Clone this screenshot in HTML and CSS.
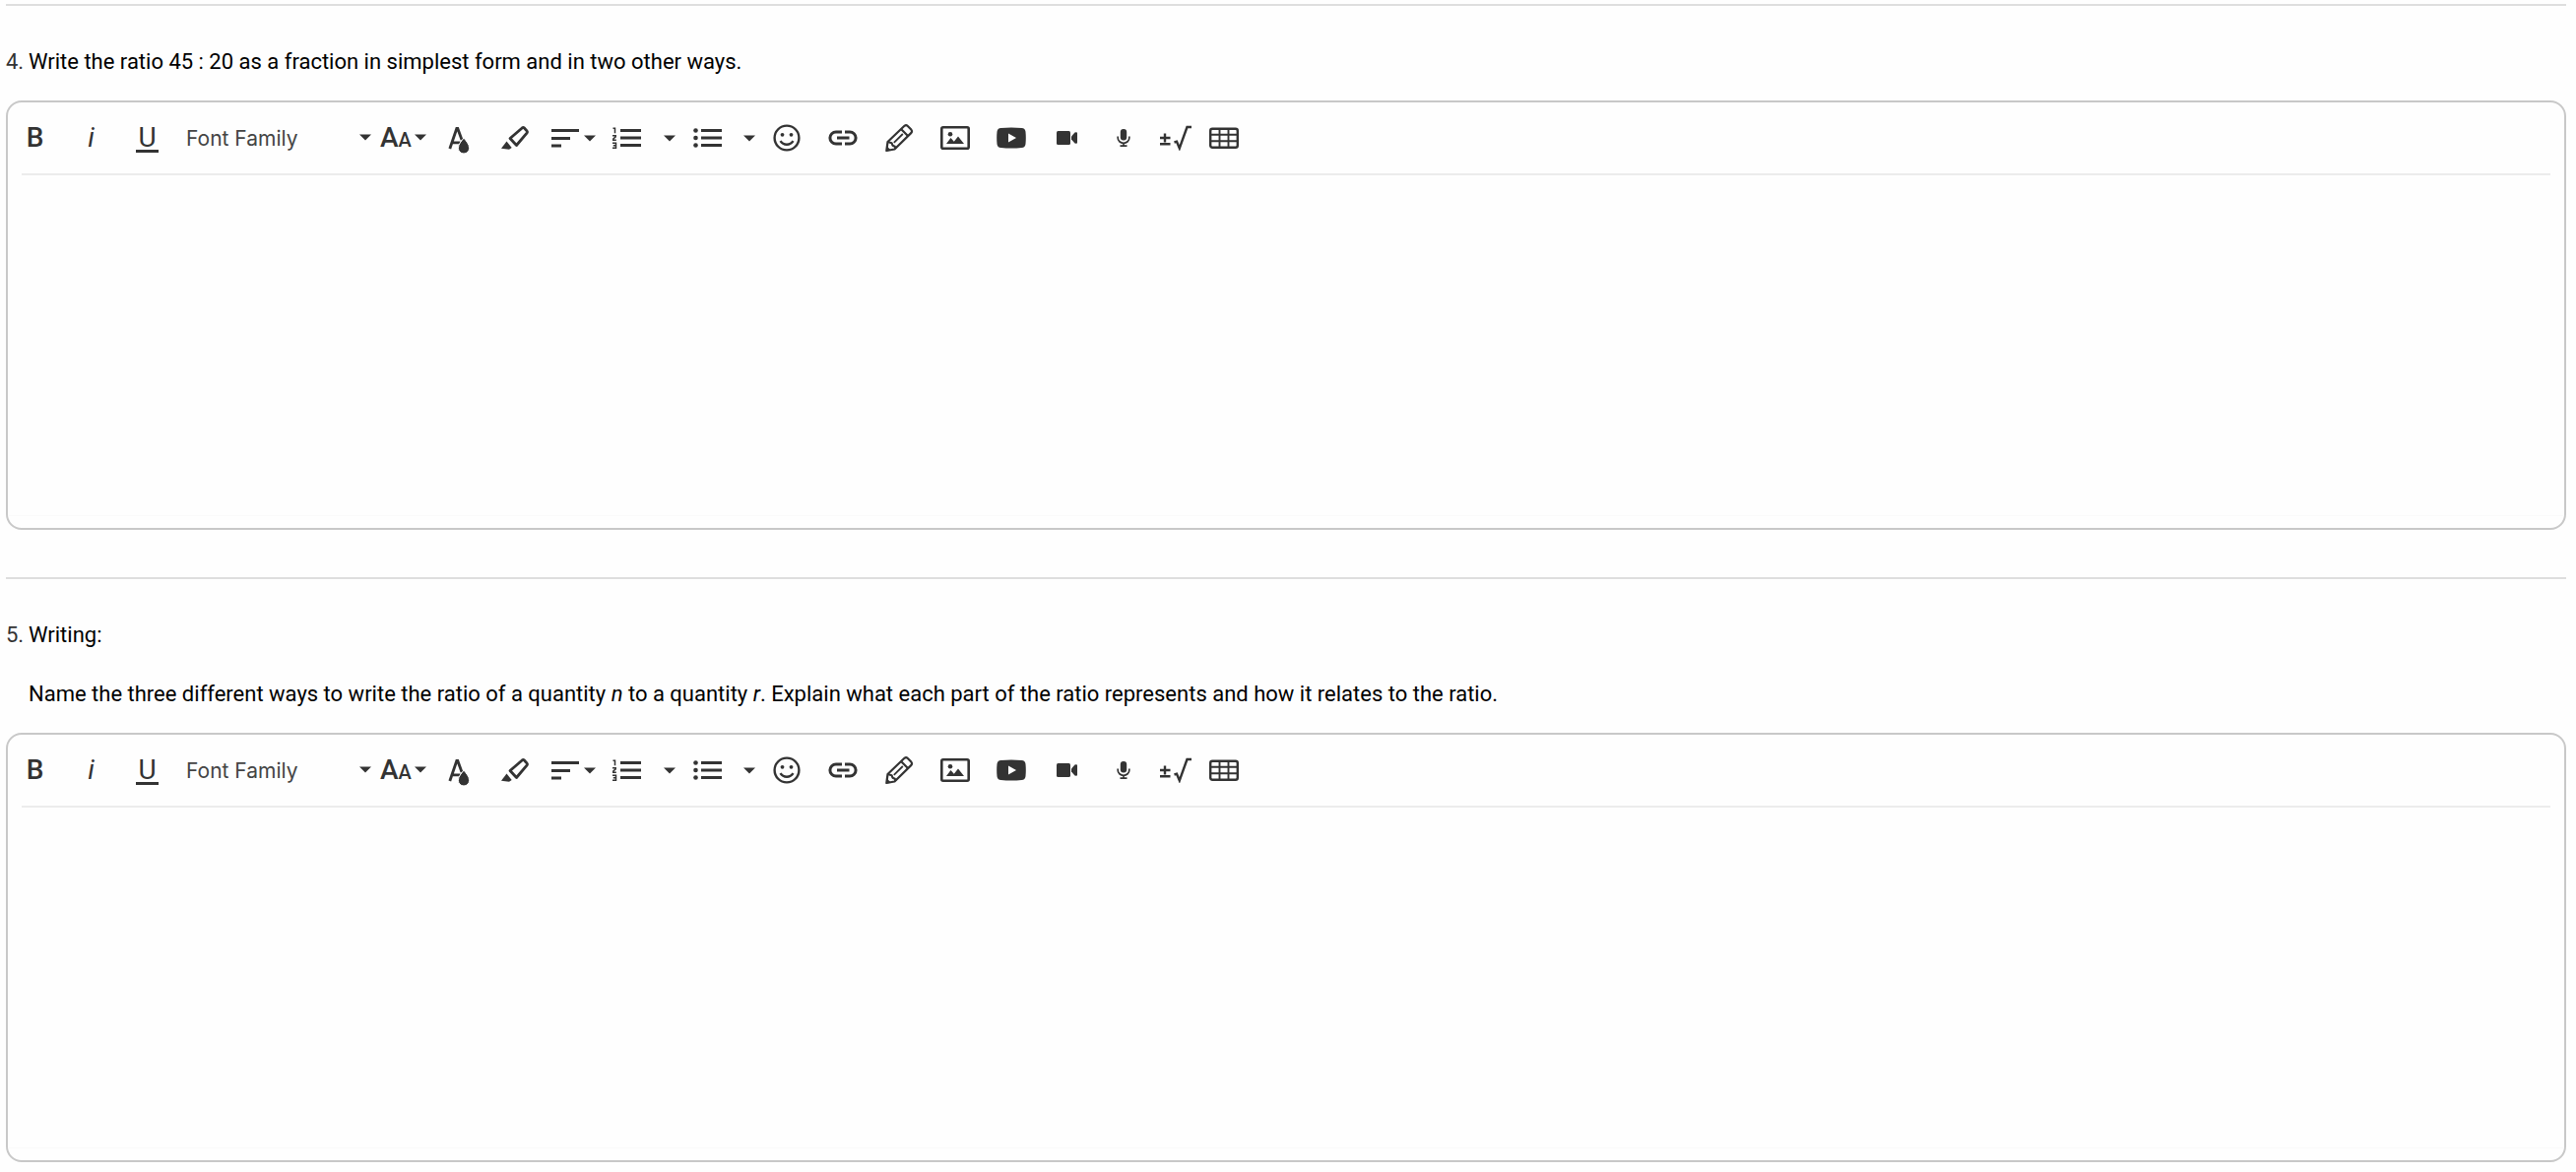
FILE: index.html
```html
<!DOCTYPE html>
<html lang="en">
<head>
	<meta charset="UTF-8">
	<meta name="viewport" content="width=device-width, initial-scale=1.0">
	<title>Ratios - Questions</title>
	<link rel="stylesheet" href="styles.css">
</head>
<body>
<!-- Shared icons for the editor toolbars -->
<svg class="icon-defs" aria-hidden="true">
	<symbol id="caret" viewBox="0 0 12 7"><path d="M0 .5h12L6 6.5z"/></symbol>
	<symbol id="text-color" viewBox="0 0 24 34">
		<path d="M2.800 28L9.800 7.500h1L15 19M5.500 21.800h8" fill="none" stroke="currentColor" stroke-width="2.800"/>
		<path d="M17 17c2.500 3.500 5.600 6.200 5.600 10.400a5.600 5.600 0 0 1-11.200 0c0-4.200 3.100-6.900 5.600-10.400z" stroke="#fefefe" stroke-width="1"/>
	</symbol>
	<symbol id="marker" viewBox="0 0 30 26">
		<path d="M10 13.500L22.500 2.700q.9-.7 1.700.1l3 3.300q.7.8 0 1.700L16.500 20.500z" fill="none" stroke="currentColor" stroke-width="2.800" stroke-linejoin="round"/>
		<path d="M6.500 16.500l5.200 6.500-2.700 1.800L1 23.800z"/>
	</symbol>
	<symbol id="align" viewBox="0 0 28 20"><path d="M0 1h28v3H0zM0 9h19v3H0zM0 16.500h10v3H0z"/></symbol>
	<symbol id="numbers" viewBox="0 0 30 24">
		<path d="M8 3h21v3H8zM8 10.500h21v3H8zM8 18h21v3H8z"/>
		<path d="M.5 2.200h2v5M0 9.800h3.200v1L.2 13.500v.8h3.600M0 17.200h3.500v5H0M.8 19.700h2.500" fill="none" stroke="currentColor" stroke-width="1.500"/>
	</symbol>
	<symbol id="bullets" viewBox="0 0 30 24">
		<path d="M9 3h21v3H9zM9 10.500h21v3H9zM9 18h21v3H9z"/>
		<circle cx="3.500" cy="4.500" r="2.300"/><circle cx="3.500" cy="12" r="2.300"/><circle cx="3.500" cy="19.500" r="2.300"/>
	</symbol>
	<symbol id="smile" viewBox="0 0 28 28">
		<circle cx="14" cy="14" r="12.400" fill="none" stroke="currentColor" stroke-width="2.400"/>
		<circle cx="9.500" cy="10.800" r="1.900"/><circle cx="18.500" cy="10.800" r="1.900"/>
		<path d="M7.500 17.200c3 4.800 10 4.800 13 0" fill="none" stroke="currentColor" stroke-width="2.400"/>
	</symbol>
	<symbol id="link" viewBox="0 0 30 18">
		<path d="M14 2.900H8a6.100 6.100 0 0 0 0 12.200h6M17 2.900h5a6.100 6.100 0 0 1 0 12.200h-5M9 9h12.500" fill="none" stroke="currentColor" stroke-width="3"/>
	</symbol>
	<symbol id="pencil" viewBox="0 0 30 30">
		<g fill="none" stroke="currentColor" stroke-width="2.200" stroke-linejoin="round">
			<path d="M2.300 28l1.200-9L20.500 2.800q1.700-1.300 3.300.2l3.500 3.600q1.400 1.700.1 3.300L10.500 26.500z"/>
			<path d="M3.500 19l4 1.200 1 2.500 2.300 1 .7 2.300M17.500 6.500l6.500 6.500"/>
			<path d="M9.800 19.800l9-8.800" stroke-width="1.800"/>
		</g>
		<path d="M2 28.500l.8-5 4.200 4.200z"/>
	</symbol>
	<symbol id="image" viewBox="0 0 30 24">
		<rect x="1.300" y="1.300" width="27.400" height="21.400" rx="1.500" fill="none" stroke="currentColor" stroke-width="2.600"/>
		<circle cx="10" cy="8.200" r="2.300"/>
		<path d="M6 18l4.500-6 3.300 3.800L18 10.500l6 7.500z"/>
	</symbol>
	<symbol id="youtube" viewBox="0 0 30 22">
		<path d="M4.500 1Q15 0 25.500 1q3.600.3 4 3.800.6 6.200 0 12.400-.4 3.500-4 3.800-10.500 1-21 0-3.600-.3-4-3.800-.6-6.200 0-12.400Q.9 1.300 4.500 1z"/>
		<path d="M12 6.500v9l8-4.500z" fill="#fff"/>
	</symbol>
	<symbol id="video" viewBox="0 0 22 16"><rect x="0" y="1" width="14" height="14" rx="1.500"/><path d="M15 6.500l3.500-4Q21 2 21 3v10q0 1-2.500.5l-3.500-4z"/></symbol>
	<symbol id="mic" viewBox="0 0 14 20">
		<rect x="3.800" y="1" width="6.400" height="11.500" rx="3"/>
		<path d="M1.200 8.500v1.500a5.800 5.300 0 0 0 11.600 0V8.500M7 15v3M3.500 18.200h7" fill="none" stroke="currentColor" stroke-width="1.700"/>
	</symbol>
	<symbol id="math" viewBox="0 0 34 26">
		<path d="M6 8.500v9M1 13h10.500M1 19.200h10.500" fill="none" stroke="currentColor" stroke-width="2.400"/>
		<path d="M15.500 17.500l2.500-.8 2.800 6.800L28.500 2H33" fill="none" stroke="currentColor" stroke-width="2.400"/>
	</symbol>
	<symbol id="table" viewBox="0 0 30 22">
		<rect x="1.200" y="1.700" width="27.600" height="19" rx="2" fill="none" stroke="currentColor" stroke-width="2.400"/>
		<path d="M10.500 1.500v19M19.500 1.500v19M1 7.800h28M1 14.200h28" fill="none" stroke="currentColor" stroke-width="1.900"/>
	</symbol>
</svg>

<main class="questions">
	<section class="question">
		<div class="prompt">
			<span class="number">4.</span>
			<div class="prompt-text">
				<p id="q4">Write the ratio 45 : 20 as a fraction in simplest form and in two other ways.</p>
			</div>
		</div>
		<div class="editor">
			<div class="toolbar">
				<button type="button" class="tool letter bold" aria-label="Bold">B</button>
				<button type="button" class="tool letter italic" aria-label="Italic">i</button>
				<button type="button" class="tool letter" aria-label="Underline"><span class="underlined">U</span></button>
				<div class="font-family">
					<select aria-label="Font Family"><option>Font Family</option></select>
					<svg width="12" height="7"><use href="#caret"/></svg>
				</div>
				<button type="button" class="tool size" aria-label="Font Size"><span class="letter">A</span><span class="small-letter">A</span><svg width="12" height="7"><use href="#caret"/></svg></button>
				<button type="button" class="tool" aria-label="Text Color"><svg width="24" height="34"><use href="#text-color"/></svg></button>
				<button type="button" class="tool" aria-label="Highlight"><svg width="30" height="26"><use href="#marker"/></svg></button>
				<button type="button" class="tool align" aria-label="Align"><svg width="28" height="20"><use href="#align"/></svg><svg width="12" height="7"><use href="#caret"/></svg></button>
				<button type="button" class="tool list" aria-label="Ordered List"><svg width="30" height="24"><use href="#numbers"/></svg></button>
				<button type="button" class="tool list-menu" aria-label="Ordered List Style"><svg width="12" height="7"><use href="#caret"/></svg></button>
				<button type="button" class="tool list" aria-label="Unordered List"><svg width="30" height="24"><use href="#bullets"/></svg></button>
				<button type="button" class="tool list-menu" aria-label="Unordered List Style"><svg width="12" height="7"><use href="#caret"/></svg></button>
				<button type="button" class="tool" aria-label="Emoticons"><svg width="28" height="28"><use href="#smile"/></svg></button>
				<button type="button" class="tool" aria-label="Insert Link"><svg width="30" height="18"><use href="#link"/></svg></button>
				<button type="button" class="tool" aria-label="Draw"><svg width="30" height="30"><use href="#pencil"/></svg></button>
				<button type="button" class="tool" aria-label="Insert Image"><svg width="30" height="24"><use href="#image"/></svg></button>
				<button type="button" class="tool" aria-label="YouTube"><svg width="30" height="22"><use href="#youtube"/></svg></button>
				<button type="button" class="tool" aria-label="Record Video"><svg width="22" height="16"><use href="#video"/></svg></button>
				<button type="button" class="tool" aria-label="Record Audio"><svg width="14" height="20"><use href="#mic"/></svg></button>
				<button type="button" class="tool narrow" aria-label="Equation"><svg width="34" height="26"><use href="#math"/></svg></button>
				<button type="button" class="tool narrow" aria-label="Insert Table"><svg width="30" height="22"><use href="#table"/></svg></button>
			</div>
			<textarea class="answer" aria-labelledby="q4"></textarea>
		</div>
	</section>

	<section class="question">
		<div class="prompt">
			<span class="number">5.</span>
			<div class="prompt-text">
				<p>Writing:</p>
				<p id="q5">Name the three different ways to write the ratio of a quantity <em>n</em> to a quantity <em>r</em>. Explain what each part of the ratio represents and how it relates to the ratio.</p>
			</div>
		</div>
		<div class="editor">
			<div class="toolbar">
				<button type="button" class="tool letter bold" aria-label="Bold">B</button>
				<button type="button" class="tool letter italic" aria-label="Italic">i</button>
				<button type="button" class="tool letter" aria-label="Underline"><span class="underlined">U</span></button>
				<div class="font-family">
					<select aria-label="Font Family"><option>Font Family</option></select>
					<svg width="12" height="7"><use href="#caret"/></svg>
				</div>
				<button type="button" class="tool size" aria-label="Font Size"><span class="letter">A</span><span class="small-letter">A</span><svg width="12" height="7"><use href="#caret"/></svg></button>
				<button type="button" class="tool" aria-label="Text Color"><svg width="24" height="34"><use href="#text-color"/></svg></button>
				<button type="button" class="tool" aria-label="Highlight"><svg width="30" height="26"><use href="#marker"/></svg></button>
				<button type="button" class="tool align" aria-label="Align"><svg width="28" height="20"><use href="#align"/></svg><svg width="12" height="7"><use href="#caret"/></svg></button>
				<button type="button" class="tool list" aria-label="Ordered List"><svg width="30" height="24"><use href="#numbers"/></svg></button>
				<button type="button" class="tool list-menu" aria-label="Ordered List Style"><svg width="12" height="7"><use href="#caret"/></svg></button>
				<button type="button" class="tool list" aria-label="Unordered List"><svg width="30" height="24"><use href="#bullets"/></svg></button>
				<button type="button" class="tool list-menu" aria-label="Unordered List Style"><svg width="12" height="7"><use href="#caret"/></svg></button>
				<button type="button" class="tool" aria-label="Emoticons"><svg width="28" height="28"><use href="#smile"/></svg></button>
				<button type="button" class="tool" aria-label="Insert Link"><svg width="30" height="18"><use href="#link"/></svg></button>
				<button type="button" class="tool" aria-label="Draw"><svg width="30" height="30"><use href="#pencil"/></svg></button>
				<button type="button" class="tool" aria-label="Insert Image"><svg width="30" height="24"><use href="#image"/></svg></button>
				<button type="button" class="tool" aria-label="YouTube"><svg width="30" height="22"><use href="#youtube"/></svg></button>
				<button type="button" class="tool" aria-label="Record Video"><svg width="22" height="16"><use href="#video"/></svg></button>
				<button type="button" class="tool" aria-label="Record Audio"><svg width="14" height="20"><use href="#mic"/></svg></button>
				<button type="button" class="tool narrow" aria-label="Equation"><svg width="34" height="26"><use href="#math"/></svg></button>
				<button type="button" class="tool narrow" aria-label="Insert Table"><svg width="30" height="22"><use href="#table"/></svg></button>
			</div>
			<textarea class="answer" aria-labelledby="q5"></textarea>
		</div>
	</section>
</main>
</body>
</html>
```
FILE: styles.css
```css
* {
	box-sizing: border-box;
}
body {
	margin: 0;
	background-color: #fefefe;
	color: #000;
	font-family: Roboto, Arial, sans-serif;
	font-size: 22px;
	line-height: 26px;
}
.icon-defs {
	display: none;
}
.questions {
	padding: 4px 10px 10px 6px;
}
.question {
	border-top: 2px solid #dedede;
	padding-top: 44px;
	margin-bottom: 48px;
}
.question:last-child {
	margin-bottom: 0;
}
.prompt {
	display: flex;
	margin-bottom: 26px;
}
.number {
	width: 23px;
	flex-shrink: 0;
	color: #333;
}
.prompt-text {
	display: flex;
	flex-direction: column;
	gap: 34px;
}
.prompt-text p {
	margin: 0;
}
.editor {
	display: flex;
	flex-direction: column;
	border: 2px solid #c8c8c8;
	border-radius: 16px;
	padding-bottom: 12px;
}
/* The line under the toolbar stops short of the box on both sides */
.toolbar {
	display: flex;
	align-items: center;
	height: 74px;
	margin: 0 14px;
	border-bottom: 2px solid #ececec;
}
.tool {
	display: flex;
	align-items: center;
	justify-content: center;
	flex-shrink: 0;
	width: 57px;
	height: 56px;
	padding: 0;
	border: none;
	border-radius: 4px;
	background: none;
	color: #333;
	font-family: inherit;
	cursor: pointer;
}
.tool:first-child {
	margin-left: -15px;
}
.tool:hover {
	background-color: #ebebeb;
}
.tool svg,
.font-family svg {
	fill: currentColor;
}
.letter {
	font-size: 28px;
	line-height: 28px;
}
.small-letter {
	font-size: 20px;
	line-height: 28px;
}
.bold {
	font-weight: 500;
}
.italic {
	font-style: italic;
}
.underlined {
	height: 29px;
	padding: 0 2px;
	border-bottom: 3px solid #333;
}
.font-family {
	position: relative;
	width: 200px;
}
.font-family select {
	appearance: none;
	width: 100%;
	height: 56px;
	padding: 0 24px 0 11px;
	border: none;
	background: none;
	color: #444;
	font-family: Inter, Arial, sans-serif;
	font-size: 21px;
}
.font-family svg {
	position: absolute;
	top: 24px;
	right: 1px;
	color: #333;
	pointer-events: none;
}
.size {
	width: 59px;
	justify-content: flex-start;
	align-items: baseline;
	padding: 14px 0 0 8px;
	font-weight: 500;
}
.size svg {
	margin-left: 3px;
	align-self: flex-start;
	margin-top: 10px;
}
.align {
	width: 57px;
	justify-content: flex-start;
	gap: 5px;
	padding-left: 9px;
}
.list {
	width: 63px;
	justify-content: flex-start;
	padding-left: 14px;
}
.list-menu {
	width: 18px;
}
.narrow {
	width: 49px;
}
.answer {
	width: 100%;
	height: 346px;
	padding: 20px;
	border: none;
	border-bottom: 1px solid #fafafa;
	outline: none;
	resize: none;
	background: none;
	font: inherit;
}
```
